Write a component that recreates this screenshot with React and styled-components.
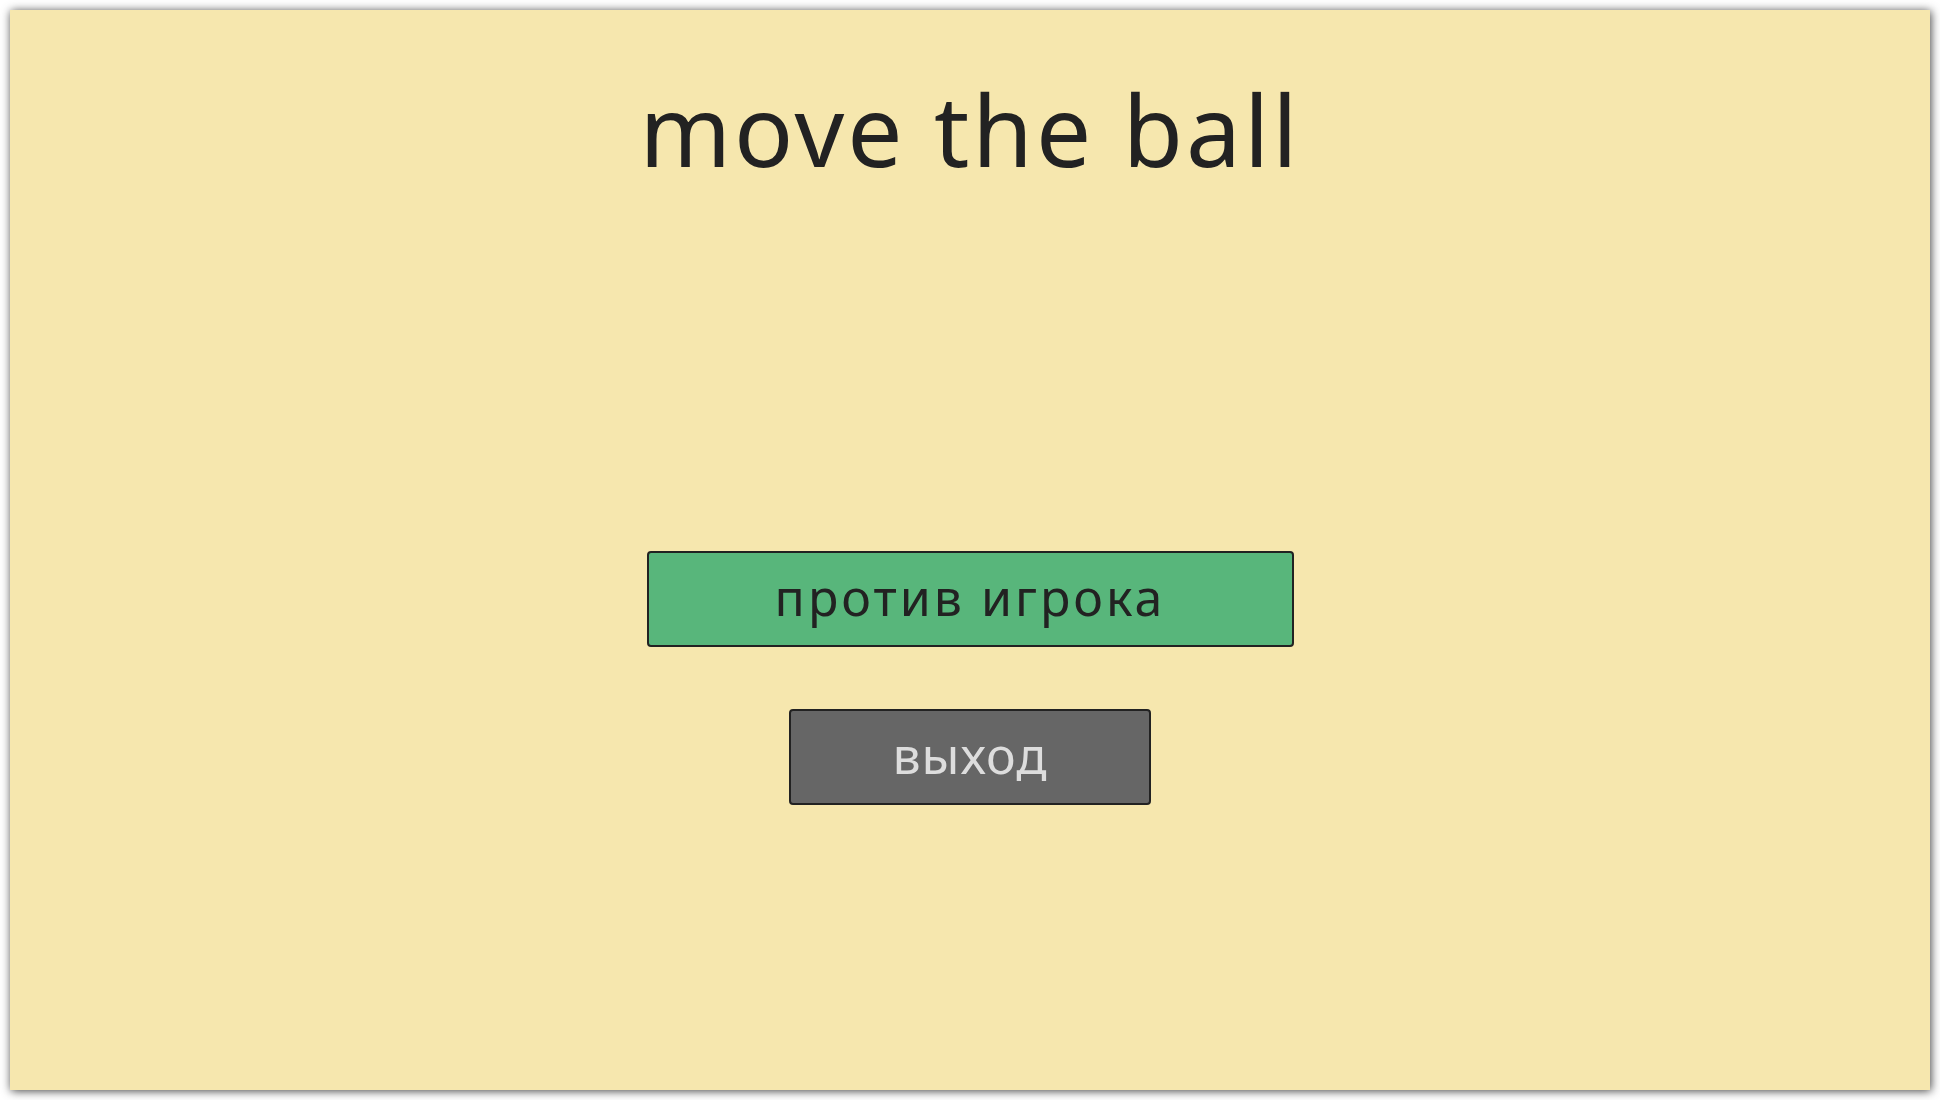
import React from 'react'
import styled, { createGlobalStyle } from 'styled-components'

const color = {
  sand: '#f6e7ae',
  green: '#58b67b',
  grey: '#666666',
  ink: '#222222',
  light: '#dddddd',
}

const GlobalStyle = createGlobalStyle`
  html, body {
    margin: 0;
    padding: 0;
    background: #ffffff;
  }
  body {
    padding: 10px;
    font-family: "Noto Sans", "Open Sans", sans-serif;
  }
`

const Screen = styled.main`
  width: 1920px;
  height: 1080px;
  box-sizing: border-box;
  background-color: ${color.sand};
  box-shadow: 1px 1px 9px rgba(0, 0, 0, 0.75);
  display: flex;
  flex-direction: column;
  align-items: center;
`

const Title = styled.h1`
  margin: 70px 0 0;
  font-size: 98px;
  font-weight: 400;
  line-height: 1;
  letter-spacing: 3px;
  color: ${color.ink};
`

const Menu = styled.nav`
  margin-top: 373px;
  display: flex;
  flex-direction: column;
  align-items: center;
  gap: 62px;
`

const MenuButton = styled.button`
  width: ${(p) => p.width}px;
  height: 96px;
  box-sizing: border-box;
  border: 2px solid ${color.ink};
  border-radius: 4px;
  background-color: ${(p) => (p.variant === 'exit' ? color.grey : color.green)};
  color: ${(p) => (p.variant === 'exit' ? color.light : color.ink)};
  font-family: "Noto Sans", "Open Sans", sans-serif;
  font-size: 50px;
  font-weight: 400;
  letter-spacing: ${(p) => (p.variant === 'exit' ? 1 : 3)}px;
  cursor: pointer;
  padding: 0 0 4px;
`

const App = () => (
  <>
    <GlobalStyle />
    <Screen>
      <Title>move the ball</Title>
      <Menu>
        <MenuButton width={647}>против игрока</MenuButton>
        <MenuButton width={362} variant="exit">выход</MenuButton>
      </Menu>
    </Screen>
  </>
)

export default App
